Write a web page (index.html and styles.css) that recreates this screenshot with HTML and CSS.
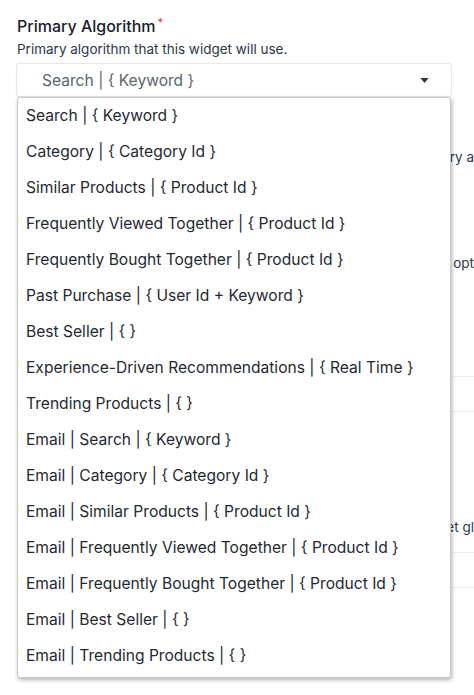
FILE: index.html
```html
<html>
    <head>
        <title>Widget settings</title>
        <link rel="stylesheet" href="styles.css">
    </head>
    <body>
        <div class="form">
            <div class="field">
                <label class="field-label">Primary Algorithm<span class="required">*</span></label>
                <p class="field-help">Primary algorithm that this widget will use.</p>

                <div class="select">
                    <div class="select-value">Search | { Keyword }</div>
                    <svg class="select-caret" width="9" height="5" viewBox="0 0 10 6">
                        <path d="M0 0 L10 0 L5 6 Z" fill="#2d3748"/>
                    </svg>

                    <!-- open menu -->
                    <ul class="select-menu">
                        <li>Search | { Keyword }</li>
                        <li>Category | { Category Id }</li>
                        <li>Similar Products | { Product Id }</li>
                        <li>Frequently Viewed Together | { Product Id }</li>
                        <li>Frequently Bought Together | { Product Id }</li>
                        <li>Past Purchase | { User Id + Keyword }</li>
                        <li>Best Seller | { }</li>
                        <li>Experience-Driven Recommendations | { Real Time }</li>
                        <li>Trending Products | { }</li>
                        <li>Email | Search | { Keyword }</li>
                        <li>Email | Category | { Category Id }</li>
                        <li>Email | Similar Products | { Product Id }</li>
                        <li>Email | Frequently Viewed Together | { Product Id }</li>
                        <li>Email | Frequently Bought Together | { Product Id }</li>
                        <li>Email | Best Seller | { }</li>
                        <li>Email | Trending Products | { }</li>
                    </ul>
                </div>
            </div>

            <!-- fields hidden behind the open menu -->
            <div class="behind">
                <div class="behind-text behind-text-1">Secondary a</div>
                <div class="behind-text behind-text-2">Show opt</div>
                <div class="behind-box"></div>
                <div class="behind-text behind-text-3">Set gl</div>
                <div class="behind-rule behind-rule-1"></div>
                <div class="behind-rule behind-rule-2"></div>
            </div>
        </div>
    </body>
</html>
```

FILE: styles.css
```css
* {
    padding: 0;
    margin: 0;
    box-sizing: border-box;
}

body {
    font-family: Inter, "Noto Sans", sans-serif;
    color: #1f2933;
    background: #fff;
    overflow: hidden;
}

.form {
    padding: 16px 0 0 17px;
    width: 474px;
}

.field-label {
    display: block;
    font-size: 16px;
    font-weight: 500;
    line-height: 20px;
    color: #1a202c;
}

.required {
    color: #e53e3e;
    font-size: 11px;
    vertical-align: top;
    margin-left: 2px;
    position: relative;
    top: -4px;
}

.field-help {
    font-size: 13.5px;
    line-height: 18px;
    margin-top: 4px;
    color: #2d3748;
}

.select {
    position: relative;
    width: 436px;
    height: 34px;
    margin-top: 5px;
    margin-left: -1px;
    border: 1px solid #e6e8eb;
    border-radius: 3px;
    box-shadow: 0 1px 2px rgba(0, 0, 0, .06);
    display: flex;
    align-items: center;
    justify-content: space-between;
    padding: 0 22px 0 25px;
    background: #fff;
    z-index: 2;
}

.select-value {
    font-size: 15.6px;
    color: #5a6472;
}

.select-menu {
    list-style: none;
    position: absolute;
    top: 33px;
    left: 0;
    width: 434px;
    background: #fff;
    border: 1px solid #c9c9c9;
    border-radius: 3px;
    box-shadow: 1px 2px 4px rgba(0, 0, 0, .3);
    padding-bottom: 3px;
}

.select-menu li {
    height: 36px;
    line-height: 36px;
    padding-left: 8px;
    font-size: 15.6px;
    color: #1f2933;
    white-space: nowrap;
}

/* only the right edge of these shows past the menu */
.behind {
    position: relative;
    z-index: 1;
    font-size: 13.5px;
    color: #2d3748;
    margin-left: -17px;
}

.behind-text {
    line-height: 18px;
    text-align: right;
    white-space: nowrap;
}

.behind-text-1 {
    margin-top: 51px;
}

.behind-text-2 {
    margin-top: 88px;
}

.behind-box {
    margin: 104px 0 0 300px;
    height: 36px;
    border: 1px solid #eef0f2;
    border-right: 0;
}

.behind-text-3 {
    margin-top: 106px;
}

.behind-rule {
    height: 1px;
    margin-left: 300px;
    background: #eef0f2;
}

.behind-rule-1 {
    margin-top: 16px;
}

.behind-rule-2 {
    margin-top: 34px;
}
```
